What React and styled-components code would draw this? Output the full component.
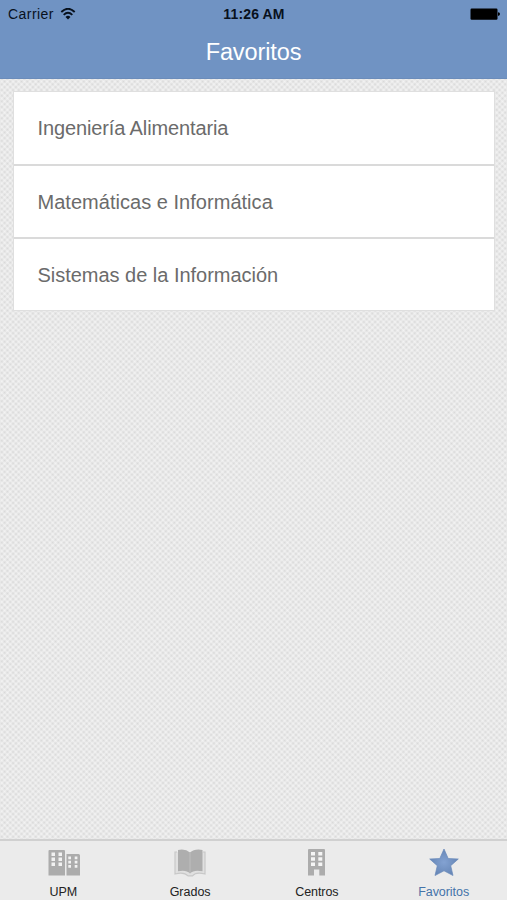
import React from "react";
import styled, { createGlobalStyle } from "styled-components";

const GlobalStyle = createGlobalStyle`
  * { box-sizing: border-box; }
  body { margin: 0; font-family: "Liberation Sans", Arial, sans-serif; }
`;

const Screen = styled.div`
  display: flex;
  flex-direction: column;
  height: 100vh;
  overflow: hidden;
  background-color: #d9d9d9;
  background-image:
    repeating-linear-gradient(45deg, rgba(255, 255, 255, 0.46) 0, rgba(255, 255, 255, 0) 2px, rgba(255, 255, 255, 0.46) 4px),
    repeating-linear-gradient(-45deg, rgba(255, 255, 255, 0.46) 0, rgba(255, 255, 255, 0) 2px, rgba(255, 255, 255, 0.46) 4px);
`;

const Header = styled.header`
  height: 79px;
  flex: none;
  background: #7093c3;
  border-bottom: 1px solid #6b8cba;
`;

const StatusBar = styled.div`
  display: grid;
  grid-template-columns: 1fr auto 1fr;
  align-items: center;
  height: 28px;
  padding: 0 7px 0 8px;
  color: #08111d;
`;

const Carrier = styled.div`
  display: flex;
  align-items: center;
  gap: 6px;
  font-size: 14px;
  line-height: 28px;
  letter-spacing: 0.45px;
`;

const Clock = styled.div`
  font-size: 14px;
  font-weight: 700;
  line-height: 28px;
  letter-spacing: 0.15px;
`;

const Battery = styled.svg`
  justify-self: end;
  display: block;
`;

const Title = styled.h1`
  margin: 0;
  color: #fff;
  font-size: 23.5px;
  font-weight: 400;
  line-height: 48px;
  text-align: center;
  letter-spacing: -0.1px;
`;

const Content = styled.main`
  flex: 1;
  padding: 13px 13px 0 14px;
`;

const List = styled.ul`
  display: grid;
  grid-template-rows: 72px 71px 71px;
  gap: 2px;
  margin: 0;
  padding: 0;
  list-style: none;
  background: #dadada;
  box-shadow: 0 0 0 1px #dfdfdf;
`;

const Row = styled.li`
  padding-left: 23.5px;
  background: #fff;
  color: #6b6b6b;
  font-size: 20px;
  line-height: 73px;
  letter-spacing: ${(p) => p.$tracking}px;
`;

const TabBar = styled.nav`
  display: grid;
  grid-template-columns: repeat(4, 1fr);
  flex: none;
  height: 61px;
  background: #ebebeb;
  border-top: 2px solid #d0d0d0;
`;

const Tab = styled.div`
  display: flex;
  flex-direction: column;
  align-items: center;
  padding-top: 6px;
  color: ${(p) => (p.$active ? "#4473a9" : "#222")};
  font-size: 12.5px;
  line-height: 16px;
  letter-spacing: ${(p) => p.$tracking}px;
`;

const TabIcon = styled.svg`
  display: block;
  flex: none;
  margin-bottom: 7px;
`;

const Wifi = () => (
  <svg width="17" height="13" viewBox="0 0 17 13" fill="none" stroke="#08111d" strokeWidth="1.9">
    <path d="M1.3 4 Q8 -2.4 14.7 4" />
    <path d="M3.7 6.9 Q8 2.7 12.3 6.9" />
    <path d="M5.5 8.9 Q8 6.7 10.5 8.9 L8 11.5 Z" fill="#08111d" stroke="none" />
  </svg>
);

const CampusIcon = () => (
  <TabIcon width="34" height="30" viewBox="0 0 34 30">
    <path fill="#acacac" d="M2.5 4Q2.5 3 3.5 3H18Q19 3 19 4V28.5H2.5ZM20.5 7H32.5Q34 7 34 8.5V28.5H20.5Z" />
    <path
      fill="#f2f2f2"
      d="M5.5 5.5h3.5v3.5H5.5zM12.5 5.5h3.5v3.5h-3.5zM5.5 10.5h3.5v3.5H5.5zM12.5 10.5h3.5v3.5h-3.5zM5.5 15.5h3.5v3.5H5.5zM12.5 15.5h3.5v3.5h-3.5zM22.3 9.5h2.7v2.7h-2.7zM28.7 9.5h2.7v2.7h-2.7zM22.3 13.8h2.7v2.7h-2.7zM28.7 13.8h2.7v2.7h-2.7zM22.3 18.1h2.7v2.7h-2.7zM28.7 18.1h2.7v2.7h-2.7z"
    />
  </TabIcon>
);

const BookIcon = () => (
  <TabIcon width="34" height="30" viewBox="0 0 34 30">
    <path
      d="M4 5H2V27Q11 24.5 15 28.8H19.5Q23 24.5 32 27V5H30"
      fill="#e0e0e0"
      stroke="#c8c8c8"
      strokeWidth="1.2"
    />
    <path
      d="M5 3Q12.5 1.5 17 5.5Q21.5 1.5 29.5 3V24.3Q21 22.3 17 26.5Q13 22.3 5 24.3Z"
      fill="#aeaeae"
    />
    <path d="M17 5.5V26" stroke="#bebebe" strokeWidth="1" />
  </TabIcon>
);

const CentreIcon = () => (
  <TabIcon width="34" height="30" viewBox="0 0 34 30">
    <path fill="#acacac" d="M8 3Q8 2 9 2H24Q25 2 25 3V28.5H19.3V22.5H14V28.5H8Z" />
    <path
      fill="#f5f5f5"
      d="M11 5h4v3.5h-4zM18.3 5h4v3.5h-4zM11 10.2h4v3.5h-4zM18.3 10.2h4v3.5h-4zM11 15.4h4v3.5h-4zM18.3 15.4h4v3.5h-4z"
    />
  </TabIcon>
);

const StarIcon = () => (
  <TabIcon width="34" height="30" viewBox="0 0 34 30">
    <defs>
      <radialGradient id="starFill">
        <stop offset="0" stopColor="#83a2d2" />
        <stop offset="1" stopColor="#6787b7" />
      </radialGradient>
    </defs>
    <path
      d="M17 2L21.2 11.5L31.3 12L23.7 18.7L26 28.5L17 23.8L8 28.5L10.3 18.7L2.7 12L12.8 11.5Z"
      fill="url(#starFill)"
      stroke="#6788b9"
      strokeWidth="0.7"
      strokeLinejoin="round"
    />
  </TabIcon>
);

const favourites = [
  { name: "Ingeniería Alimentaria", tracking: -0.12 },
  { name: "Matemáticas e Informática", tracking: 0.03 },
  { name: "Sistemas de la Información", tracking: -0.02 },
];

const tabs = [
  { label: "UPM", Icon: CampusIcon, tracking: 0 },
  { label: "Grados", Icon: BookIcon, tracking: 0 },
  { label: "Centros", Icon: CentreIcon, tracking: -0.05 },
  { label: "Favoritos", Icon: StarIcon, tracking: -0.05, active: true },
];

export default function App() {
  return (
    <>
      <GlobalStyle />
      <Screen>
        <Header>
          <StatusBar>
            <Carrier>
              Carrier
              <Wifi />
            </Carrier>
            <Clock>11:26 AM</Clock>
            <Battery width="30" height="13" viewBox="0 0 30 13">
              <rect x="0.5" y="0.5" width="27" height="11.3" rx="1.2" fill="#000" />
              <path d="M28 4.3Q30 4.3 30 6.1Q30 7.9 28 7.9Z" fill="#000" />
            </Battery>
          </StatusBar>
          <Title>Favoritos</Title>
        </Header>
        <Content>
          <List>
            {favourites.map(({ name, tracking }) => (
              <Row key={name} $tracking={tracking}>
                {name}
              </Row>
            ))}
          </List>
        </Content>
        <TabBar>
          {tabs.map(({ label, Icon, tracking, active }) => (
            <Tab key={label} $active={active} $tracking={tracking}>
              <Icon />
              {label}
            </Tab>
          ))}
        </TabBar>
      </Screen>
    </>
  );
}
